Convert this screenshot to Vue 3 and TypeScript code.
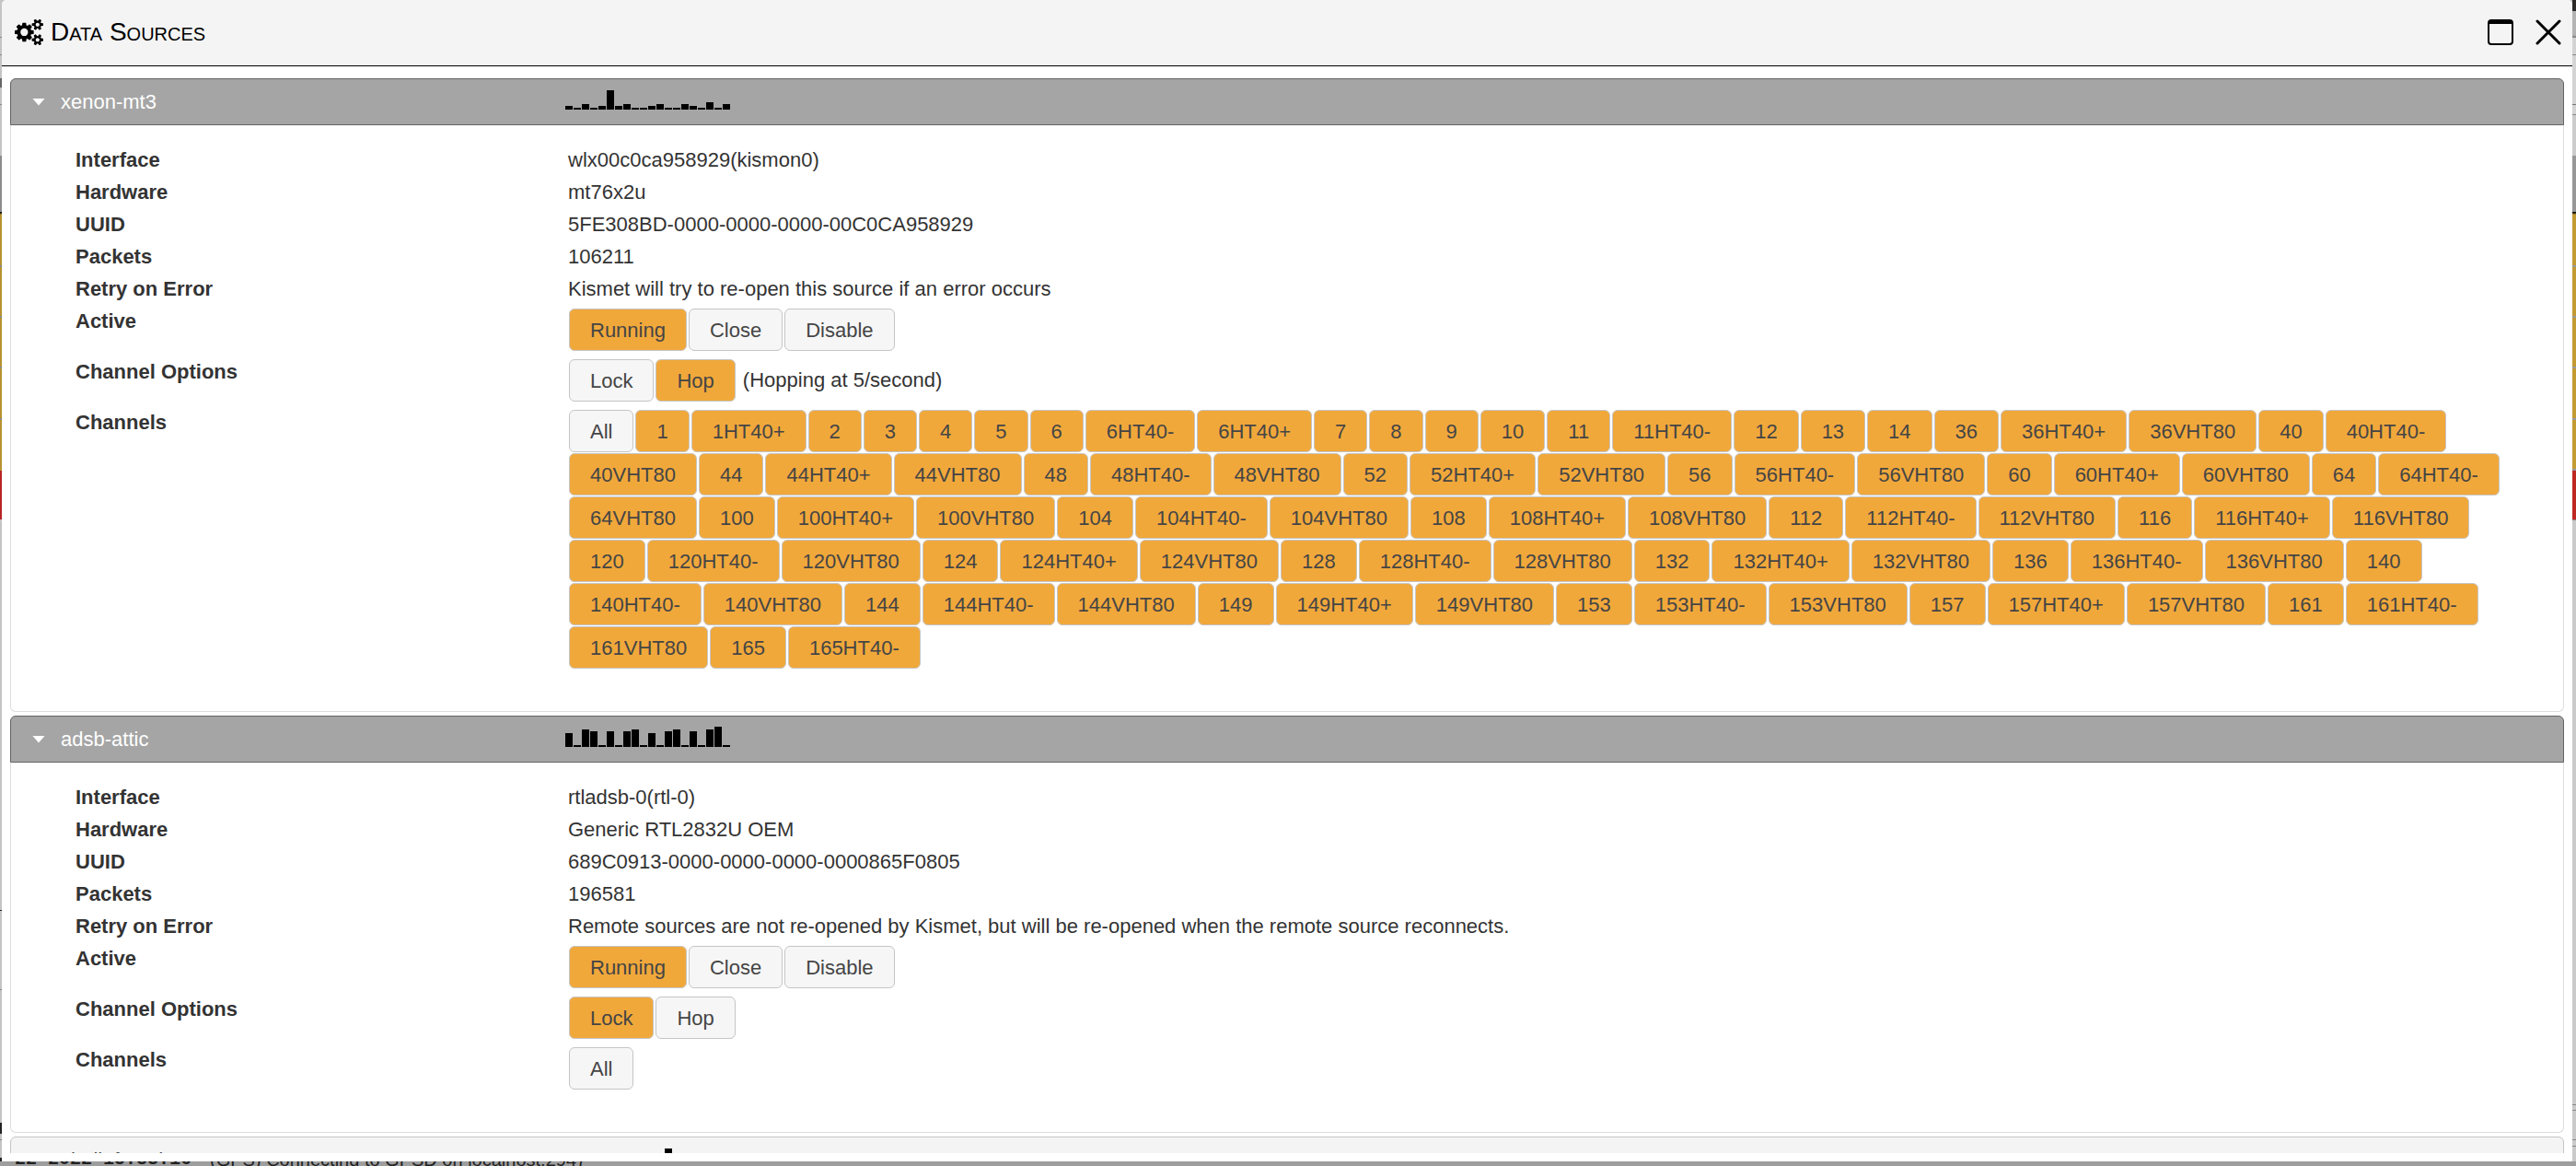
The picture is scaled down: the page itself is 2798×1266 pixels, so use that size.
<script setup lang="ts">
import { ref } from 'vue'

interface Source {
  name: string
  iface: string
  hardware: string
  uuid: string
  packets: number
  retry: string
  hopping: boolean
  hopRate: string
  channels: string[]
  activity: number[]
}

const wifiChannels =
  '1 1HT40+ 2 3 4 5 6 6HT40- 6HT40+ 7 8 9 10 11 11HT40- 12 13 14 36 36HT40+ 36VHT80 40 40HT40- ' +
  '40VHT80 44 44HT40+ 44VHT80 48 48HT40- 48VHT80 52 52HT40+ 52VHT80 56 56HT40- 56VHT80 60 60HT40+ 60VHT80 64 64HT40- ' +
  '64VHT80 100 100HT40+ 100VHT80 104 104HT40- 104VHT80 108 108HT40+ 108VHT80 112 112HT40- 112VHT80 116 116HT40+ 116VHT80 ' +
  '120 120HT40- 120VHT80 124 124HT40+ 124VHT80 128 128HT40- 128VHT80 132 132HT40+ 132VHT80 136 136HT40- 136VHT80 140 ' +
  '140HT40- 140VHT80 144 144HT40- 144VHT80 149 149HT40+ 149VHT80 153 153HT40- 153VHT80 157 157HT40+ 157VHT80 161 161HT40- ' +
  '161VHT80 165 165HT40-'

const sources = ref<Source[]>([
  {
    name: 'xenon-mt3',
    iface: 'wlx00c0ca958929(kismon0)',
    hardware: 'mt76x2u',
    uuid: '5FE308BD-0000-0000-0000-00C0CA958929',
    packets: 106211,
    retry: 'Kismet will try to re-open this source if an error occurs',
    hopping: true,
    hopRate: '(Hopping at 5/second)',
    channels: wifiChannels.split(' '),
    activity: [4, 2, 6, 2, 4, 21, 4, 6, 2, 2, 4, 6, 2, 2, 6, 4, 2, 8, 2, 6],
  },
  {
    name: 'adsb-attic',
    iface: 'rtladsb-0(rtl-0)',
    hardware: 'Generic RTL2832U OEM',
    uuid: '689C0913-0000-0000-0000-0000865F0805',
    packets: 196581,
    retry: 'Remote sources are not re-opened by Kismet, but will be re-opened when the remote source reconnects.',
    hopping: false,
    hopRate: '',
    channels: [],
    activity: [15, 2, 19, 17, 2, 17, 2, 17, 19, 2, 15, 2, 17, 19, 2, 17, 2, 19, 22, 2],
  },
])

const collapsed = {
  name: 'shellofaced',
  activity: [0, 0, 0, 0, 0, 0, 0, 0, 0, 0, 0, 0, 21, 0, 0, 0, 0, 0, 0, 0],
}

const smallCog =
  'M1920 198v-140q0 -16 -149 -31q-12 -27 -30 -52q51 -113 51 -138q0 -4 -4 -7q-122 -71 -124 -71q-8 0 -46 47t-52 68q-20 -2 -30 -2t-30 2q-14 -21 -52 -68t-46 -47q-2 0 -124 71q-4 3 -4 7q0 25 51 138q-18 25 -30 52q-149 15 -149 31v140q0 16 149 31q13 29 30 52q-51 113 -51 138q0 4 4 7q4 2 35 20t59 34t30 16q8 0 46 -46.5t52 -67.5q20 2 30 2t30 -2q51 71 92 112l6 2q4 0 124 -70q4 -3 4 -7q0 -25 -51 -138q17 -23 30 -52q149 -15 149 -31z' +
  'M1664 128q0 -52 -38 -90t-90 -38t-90 38t-38 90q0 53 37.5 90.5t90.5 37.5t90.5 -37.5t37.5 -90.5z'
</script>

<template>
  <div class="desktop">
    <div class="row">
      <div class="edge edge-left"></div>
      <section class="window" aria-label="Data Sources">
        <header class="titlebar">
          <svg class="cogs" viewBox="0 -1414 1920 1550" aria-hidden="true">
            <g transform="scale(1,-1)" fill="#000" fill-rule="evenodd">
              <path
                d="M896 640q0 -106 -75 -181t-181 -75t-181 75t-75 181t75 181t181 75t181 -75t75 -181zM1280 731v-185q0 -10 -7 -19.5t-16 -10.5l-155 -24q-11 -35 -32 -76q34 -48 90 -115q7 -11 7 -20q0 -12 -7 -19q-23 -30 -82.5 -89.5t-78.5 -59.5q-11 0 -21 7l-115 90q-37 -19 -77 -31q-11 -108 -23 -155q-7 -24 -30 -24h-186q-11 0 -20 7.5t-10 17.5l-23 153q-34 10 -75 31l-118 -89q-7 -7 -20 -7q-11 0 -21 8q-144 133 -144 160q0 9 7 19q10 14 41 53t47 61q-23 44 -35 82l-152 24q-10 1 -17 9.5t-7 19.5v185q0 10 7 19.5t16 10.5l155 24q11 35 32 76q-34 48 -90 115q-7 11 -7 20q0 12 7 20q22 30 82 89t79 59q11 0 21 -7l115 -90q34 18 77 32q11 108 23 154q7 24 30 24h186q11 0 20 -7.5t10 -17.5l23 -153q34 -10 75 -31l118 89q8 7 20 7q11 0 21 -8q144 -133 144 -160q0 -8 -7 -19q-12 -16 -42 -54t-45 -60q23 -48 34 -82l152 -23q10 -2 17 -10.5t7 -19.5z"
              />
              <path :d="smallCog" />
              <path :d="smallCog" transform="translate(0,1024)" />
            </g>
          </svg>
          <h1>Data Sources</h1>
          <button type="button" class="control" aria-label="Maximize">
            <svg viewBox="0 0 28 28">
              <rect x="1" y="1" width="26" height="26" rx="3" fill="none" stroke="#000" stroke-width="2" />
              <path d="M1 5V3a2 2 0 0 1 2-2h22a2 2 0 0 1 2 2v2z" />
            </svg>
          </button>
          <button type="button" class="control" aria-label="Close window">
            <svg viewBox="0 0 28 28">
              <path d="M2 2l24 24M26 2l-24 24" fill="none" stroke="#000" stroke-width="3" stroke-linecap="round" />
            </svg>
          </button>
        </header>

        <div class="sources">
          <article v-for="s in sources" :key="s.name" class="source">
            <button type="button" class="bar open" aria-expanded="true">
              <span class="arrow"></span>
              <span class="name">{{ s.name }}</span>
              <svg class="spark" viewBox="0 0 180 24">
                <rect v-for="(h, i) in s.activity" :key="i" :x="i * 9" :y="24 - h" width="8" :height="h" />
              </svg>
            </button>
            <dl class="panel">
              <dt>Interface</dt>
              <dd>{{ s.iface }}</dd>
              <dt>Hardware</dt>
              <dd>{{ s.hardware }}</dd>
              <dt>UUID</dt>
              <dd>{{ s.uuid }}</dd>
              <dt>Packets</dt>
              <dd>{{ s.packets }}</dd>
              <dt>Retry on Error</dt>
              <dd>{{ s.retry }}</dd>
              <dt>Active</dt>
              <dd class="buttons">
                <button type="button" class="btn on">Running</button>
                <button type="button" class="btn">Close</button>
                <button type="button" class="btn">Disable</button>
              </dd>
              <dt>Channel Options</dt>
              <dd class="buttons">
                <button type="button" class="btn" :class="{ on: !s.hopping }" @click="s.hopping = false">Lock</button>
                <button type="button" class="btn" :class="{ on: s.hopping }" @click="s.hopping = true">Hop</button>
                <span v-if="s.hopRate" class="rate">{{ s.hopRate }}</span>
              </dd>
              <dt>Channels</dt>
              <dd class="buttons">
                <button type="button" class="btn">All</button>
                <button v-for="c in s.channels" :key="c" type="button" class="btn on">{{ c }}</button>
              </dd>
            </dl>
          </article>

          <article class="source">
            <button type="button" class="bar" aria-expanded="false">
              <span class="arrow"></span>
              <span class="name">{{ collapsed.name }}</span>
              <svg class="spark" viewBox="0 0 180 24">
                <rect v-for="(h, i) in collapsed.activity" :key="i" :x="i * 9" :y="24 - h" width="8" :height="h" />
              </svg>
            </button>
          </article>
        </div>
      </section>
      <div class="edge edge-right"></div>
    </div>
    <div class="log">
      <span class="stamp">22 2022 15:33:16</span>
      <span>(GPS) Connecting to GPSD on localhost:2947</span>
    </div>
  </div>
</template>

<style>
body {
  margin: 0;
}
</style>

<style scoped>
.desktop {
  display: flex;
  flex-direction: column;
  height: 100vh;
  overflow: hidden;
  background: #c4c4c4;
  color: #333;
  font: 22px/35px "Liberation Sans", Arial, sans-serif;
}
.desktop * {
  box-sizing: border-box;
}
.row {
  display: flex;
  flex: 1;
  min-height: 0;
}
.edge {
  flex: none;
}
.edge-left {
  width: 2px;
  background: linear-gradient(
    #c4c4c4 40px, #888 40px 41px, #c4c4c4 41px 59px, #888 59px 60px, #c4c4c4 60px 85px, #666 85px 95px,
    #c4c4c4 95px 113px, #888 113px 114px, #c4c4c4 114px 169px, #8c8c8c 169px 230px, #111 230px 231px, #b89230 233px 288px,
    #888 288px 290px, #b89230 290px 343px, #888 343px 345px, #b89230 345px 398px, #888 398px 400px, #b89230 400px 454px,
    #888 454px 456px, #b89230 456px 511px, #b92424 511px 564px, #c4c4c4 564px 988px, #222 988px 989px, #c4c4c4 989px 1074px,
    #888 1074px 1075px, #c4c4c4 1075px 1219px, #222 1219px 1231px, #c4c4c4 1231px 1237px, #888 1237px 1238px,
    #c4c4c4 1238px 1257px, #222 1257px
  );
}
.edge-right {
  width: 4px;
  background: linear-gradient(
    #2c2a29 12px, #b4b4b4 12px 38px, #888 40px 41px, #d4d4d4 41px 59px, #888 59px 60px, #d4d4d4 60px 113px, #777 113px 114px,
    #d4d4d4 114px 124px, #888 124px 125px, #ccc 125px 169px, #979797 169px 230px, #111 230px 231px, #c49a33 233px 288px,
    #999 288px 290px, #c49a33 290px 343px, #999 343px 345px, #c49a33 345px 398px, #999 398px 400px, #c49a33 400px 454px,
    #999 454px 456px, #c49a33 456px 509px, #999 509px 511px, #be2823 511px 564px, #888 564px 565px, #cacaca 565px 1199px,
    #888 1199px 1200px, #cacaca 1200px 1205px, #888 1205px 1206px, #cacaca 1206px 1237px, #888 1237px 1238px,
    #cacaca 1238px 1244px, #888 1244px 1245px, #cacaca 1245px
  );
}
.window {
  display: flex;
  flex: 1;
  flex-direction: column;
  min-width: 0;
  padding-bottom: 9px;
  background: #fff;
  border-radius: 5px 5px 0 0;
}
.titlebar {
  display: flex;
  flex: none;
  align-items: center;
  height: 72px;
  padding: 0 12px 2px 14px;
  background: #f4f4f4;
  border-bottom: 1px solid #000;
  border-radius: 5px 5px 0 0;
}
.cogs {
  width: 31px;
  height: 28px;
}
h1 {
  flex: 1;
  margin: 0 0 0 8px;
  color: #000;
  font-size: 28px;
  font-weight: 400;
  font-variant: small-caps;
}
.control {
  width: 28px;
  height: 28px;
  margin-left: 24px;
  padding: 0;
  border: 0;
  background: none;
}
.control svg {
  display: block;
}
.sources {
  flex: 1;
  min-height: 0;
  padding: 13px 9px 0;
  overflow: hidden;
}
.source {
  margin-bottom: 4px;
}
.bar {
  display: flex;
  align-items: center;
  width: 100%;
  height: 51px;
  padding: 0 23px;
  border: 1px solid #c5c5c5;
  border-radius: 6px 6px 0 0;
  background: #f4f4f4;
  color: #454545;
  font: inherit;
  text-align: left;
}
.bar.open {
  border-color: #636363;
  background: #a5a5a5;
  color: #fff;
}
.arrow {
  width: 14px;
  height: 8px;
  clip-path: polygon(0 0, 100% 0, 50% 100%);
}
.open .arrow {
  background: #fff;
}
.name {
  width: 548px;
  margin-left: 17px;
}
.spark {
  width: 180px;
  height: 24px;
  margin-bottom: 7px;
}
.panel {
  display: grid;
  grid-template-columns: 535px 1fr;
  margin: 0;
  padding: 20px 54px 41px 70px;
  border: 1px solid #ddd;
  border-top: 0;
  border-radius: 0 0 6px 6px;
}
dt {
  font-weight: 700;
}
dd {
  margin: 0;
}
.buttons {
  display: flex;
  flex-wrap: wrap;
  row-gap: 1px;
  padding: 4px 0 5px;
}
.btn {
  height: 46px;
  margin: 0 1px;
  padding: 0 22px;
  border: 1px solid #c5c5c5;
  border-radius: 6px;
  background: #f6f6f6;
  color: #454545;
  font: inherit;
}
.btn.on {
  background: #f1a83b;
}
.rate {
  margin-left: 7px;
  line-height: 46px;
}
.log {
  display: flex;
  flex: none;
  gap: 20px;
  align-items: flex-end;
  height: 5px;
  padding-left: 16px;
  overflow: hidden;
  background: #9e9e9e;
  color: #222;
  font-size: 20px;
  line-height: 14px;
  white-space: nowrap;
}
.stamp {
  font-family: "Liberation Mono", monospace;
  font-weight: 700;
}
</style>
